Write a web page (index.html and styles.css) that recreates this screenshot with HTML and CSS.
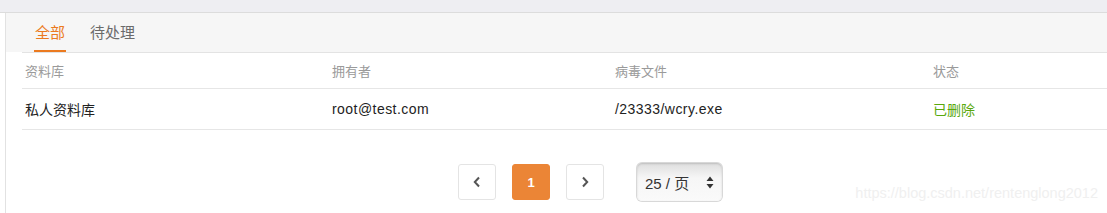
FILE: index.html
```html
<!DOCTYPE html>
<html lang="zh-CN">
<head>
  <meta charset="UTF-8">
  <title>病毒扫描</title>
  <link rel="stylesheet" href="styles.css">
</head>
<body>
  <div class="topbar"></div>
  <div class="panel">
    <div class="tabs">
      <span class="tab active">全部</span>
      <span class="tab">待处理</span>
    </div>
    <div class="table">
      <div class="row head">
        <div class="cell">资料库</div>
        <div class="cell">拥有者</div>
        <div class="cell">病毒文件</div>
        <div class="cell">状态</div>
      </div>
      <div class="row body">
        <div class="cell">私人资料库</div>
        <div class="cell latin">root@test.com</div>
        <div class="cell latin">/23333/wcry.exe</div>
        <div class="cell deleted">已删除</div>
      </div>
    </div>
    <div class="pager">
      <button class="page-btn">
        <svg width="10" height="12" viewBox="0 0 10 12"><path d="M7 1.5 L2.8 6 L7 10.5" fill="none" stroke="#555" stroke-width="2"/></svg>
      </button>
      <button class="page-btn current">1</button>
      <button class="page-btn">
        <svg width="10" height="12" viewBox="0 0 10 12"><path d="M3 1.5 L7.2 6 L3 10.5" fill="none" stroke="#555" stroke-width="2"/></svg>
      </button>
      <div class="per-page">
        <span>25 / 页</span>
        <svg width="8" height="13" viewBox="0 0 8 13"><path d="M4 0.5 L7.5 5 L0.5 5 Z M4 12.5 L7.5 8 L0.5 8 Z" fill="#333"/></svg>
      </div>
    </div>
    <div class="watermark">https://blog.csdn.net/rentenglong2012</div>
  </div>
</body>
</html>
```

FILE: styles.css
```css
body {
  margin: 0;
  font-family: "Liberation Sans", "Noto Sans CJK SC", sans-serif;
  background: #fff;
  color: #333;
  overflow: hidden;
}
.topbar {
  height: 12px;
  background: #eeeef2;
  border-bottom: 1px solid #dcdcdc;
}
.panel {
  position: relative;
  margin-left: 5px;
  border-left: 1px solid #e2e2e2;
  height: 200px;
}
.tabs {
  background: #f6f6f6;
  height: 39px;
  padding-left: 28px;
  display: flex;
  gap: 24px;
}
.tab {
  font-size: 15px;
  line-height: 39px;
  color: #6b6b6b;
}
.tab.active {
  color: #eb7a20;
  box-shadow: inset 0 -2px 0 #eb7a20;
  padding: 0 1px;
}
.table {
  margin-left: 16px;
  border-top: 1px solid #e3e3e3;
}
.row {
  display: grid;
  grid-template-columns: 307px 283px 318px 1fr;
  border-bottom: 1px solid #e6e6e6;
  height: 40px;
  align-items: center;
  font-size: 14px;
}
.row.head {
  height: 35px;
  font-size: 13px;
  color: #9a9a9a;
}
.row.body {
  color: #222;
}
.cell {
  padding-left: 3px;
}
.latin {
  letter-spacing: 0.45px;
}
.deleted {
  color: #59a80d;
}
.pager {
  display: flex;
  align-items: center;
  margin-top: 33px;
  padding-left: 452px;
}
.page-btn {
  width: 38px;
  height: 36px;
  border: 1px solid #e4e4e4;
  border-radius: 3px;
  background: #fff;
  margin-right: 16px;
  display: flex;
  align-items: center;
  justify-content: center;
  padding: 0;
  font-family: "Liberation Sans", sans-serif;
  font-size: 13px;
  font-weight: bold;
}
.page-btn.current {
  background: #eb8536;
  border-color: #eb8536;
  color: #fff;
}
.per-page {
  margin-left: 17px;
  width: 85px;
  height: 38px;
  box-sizing: border-box;
  border-radius: 5px;
  background: linear-gradient(#dedede, #f6f6f6 40%, #fafafa);
  box-shadow: 0 0 0 1px #d8d8d8, inset 0 1px 2px rgba(0,0,0,0.15);
  display: flex;
  align-items: center;
  justify-content: space-between;
  padding: 0 8px;
  font-size: 15px;
  color: #333;
}
.watermark {
  position: absolute;
  right: 9px;
  bottom: 12px;
  font-size: 14.5px;
  color: #f0f0f0;
}
```
